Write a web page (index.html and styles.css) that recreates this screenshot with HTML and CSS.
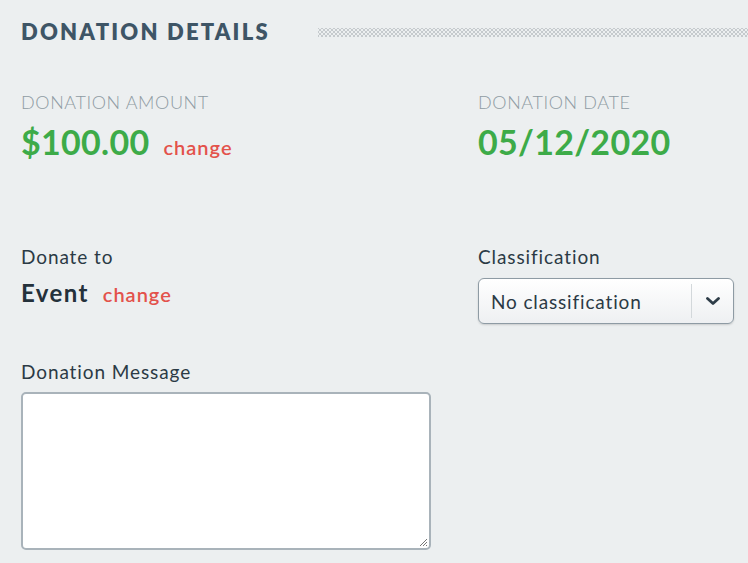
FILE: index.html
```html
<!DOCTYPE html>
<html>
<head>
<meta charset="utf-8">
<link rel="stylesheet" href="styles.css">
</head>
<body>
<div class="page">
  <div class="title-row">
    <h2 class="title">DONATION DETAILS</h2>
    <div class="dots"></div>
  </div>
  <div class="grid">
    <div class="cell">
      <div class="caps-label">DONATION AMOUNT</div>
      <div class="big-value"><span class="green">$100.00</span><a class="change">change</a></div>
    </div>
    <div class="cell">
      <div class="caps-label">DONATION DATE</div>
      <div class="big-value"><span class="green">05/12/2020</span></div>
    </div>
    <div class="cell row3">
      <div class="label">Donate to</div>
      <div class="event"><span class="event-name">Event</span><a class="change">change</a></div>
    </div>
    <div class="cell row3">
      <div class="label">Classification</div>
      <div class="select">
        <span class="select-text">No classification</span>
        <span class="select-btn">
          <svg width="14" height="9" viewBox="0 0 14 9"><path d="M1.5 1.5 L7 6.5 L12.5 1.5" fill="none" stroke="#2e3d48" stroke-width="2.8" stroke-linecap="round" stroke-linejoin="round"/></svg>
        </span>
      </div>
    </div>
    <div class="cell row4">
      <div class="label">Donation Message</div>
      <div class="textarea">
        <svg class="grip" width="10" height="10" viewBox="0 0 10 10"><path d="M9 2 L2 9 M9 5 L5 9 M9 8 L8 9" stroke="#777" stroke-width="1"/></svg>
      </div>
    </div>
    <div class="cell row4"></div>
  </div>
</div>
</body>
</html>
```

FILE: styles.css
```css
html, body {
  margin: 0;
  padding: 0;
  background: #eceff0;
}
body {
  font-family: "Lato", "Open Sans", sans-serif;
  color: #24313b;
}
.page {
  padding: 18px 0 0 21px;
  width: 727px;
  height: 545px;
  overflow: hidden;
}
.title-row {
  display: flex;
  align-items: center;
}
.title {
  margin: 0;
  font-size: 22px;
  font-weight: 800;
  letter-spacing: 2.2px;
  color: #3e5566;
  line-height: 28px;
}
.dots {
  flex: 1;
  margin-left: 48px;
  height: 9px;
  background-image:
    radial-gradient(circle, #c5cacd 0.8px, transparent 1.2px),
    radial-gradient(circle, #c5cacd 0.8px, transparent 1.2px);
  background-size: 4px 4px, 4px 4px;
  background-position: 0 0, 2px 2px;
}
.grid {
  display: grid;
  grid-template-columns: 457px 1fr;
  margin-top: 46px;
}
.caps-label {
  font-size: 18px;
  font-weight: 300;
  color: #8f9ba3;
  line-height: 20px;
  letter-spacing: 0.6px;
}
.big-value {
  display: flex;
  align-items: baseline;
  margin-top: 11px;
  line-height: 38px;
}
.green {
  color: #3dab48;
  font-size: 34px;
  font-weight: 700;
  letter-spacing: 0.3px;
}
.change {
  color: #e3524b;
  font-size: 20px;
  font-weight: 600;
  letter-spacing: 1px;
  margin-left: 14px;
}
.row3 {
  margin-top: 80px;
}
.label {
  font-size: 19px;
  line-height: 22px;
  color: #2b3a45;
  letter-spacing: 0.9px;
}
.event {
  display: flex;
  align-items: baseline;
  margin-top: 10px;
}
.event-name {
  font-size: 24px;
  font-weight: 700;
  color: #24313b;
  line-height: 30px;
  letter-spacing: 1.4px;
}
.select {
  margin-top: 10px;
  width: 256px;
  height: 46px;
  box-sizing: border-box;
  border: 1.5px solid #8e9ba4;
  border-radius: 6px;
  background: linear-gradient(#ffffff, #eef0f2);
  box-shadow: 0 1px 2px rgba(0,0,0,0.15);
  display: flex;
  align-items: center;
}
.select-text {
  flex: 1;
  padding-left: 12px;
  font-size: 19px;
  color: #2b3a45;
  letter-spacing: 0.85px;
}
.select-btn {
  width: 41px;
  height: 34px;
  border-left: 1px solid #d3d8db;
  display: flex;
  align-items: center;
  justify-content: center;
}
.row4 {
  margin-top: 37px;
}
.textarea {
  position: relative;
  margin-top: 9px;
  width: 410px;
  height: 158px;
  box-sizing: border-box;
  border: 2px solid #a9b3ba;
  border-radius: 5px;
  background: #fff;
}
.grip {
  position: absolute;
  right: 1px;
  bottom: 1px;
}
```
